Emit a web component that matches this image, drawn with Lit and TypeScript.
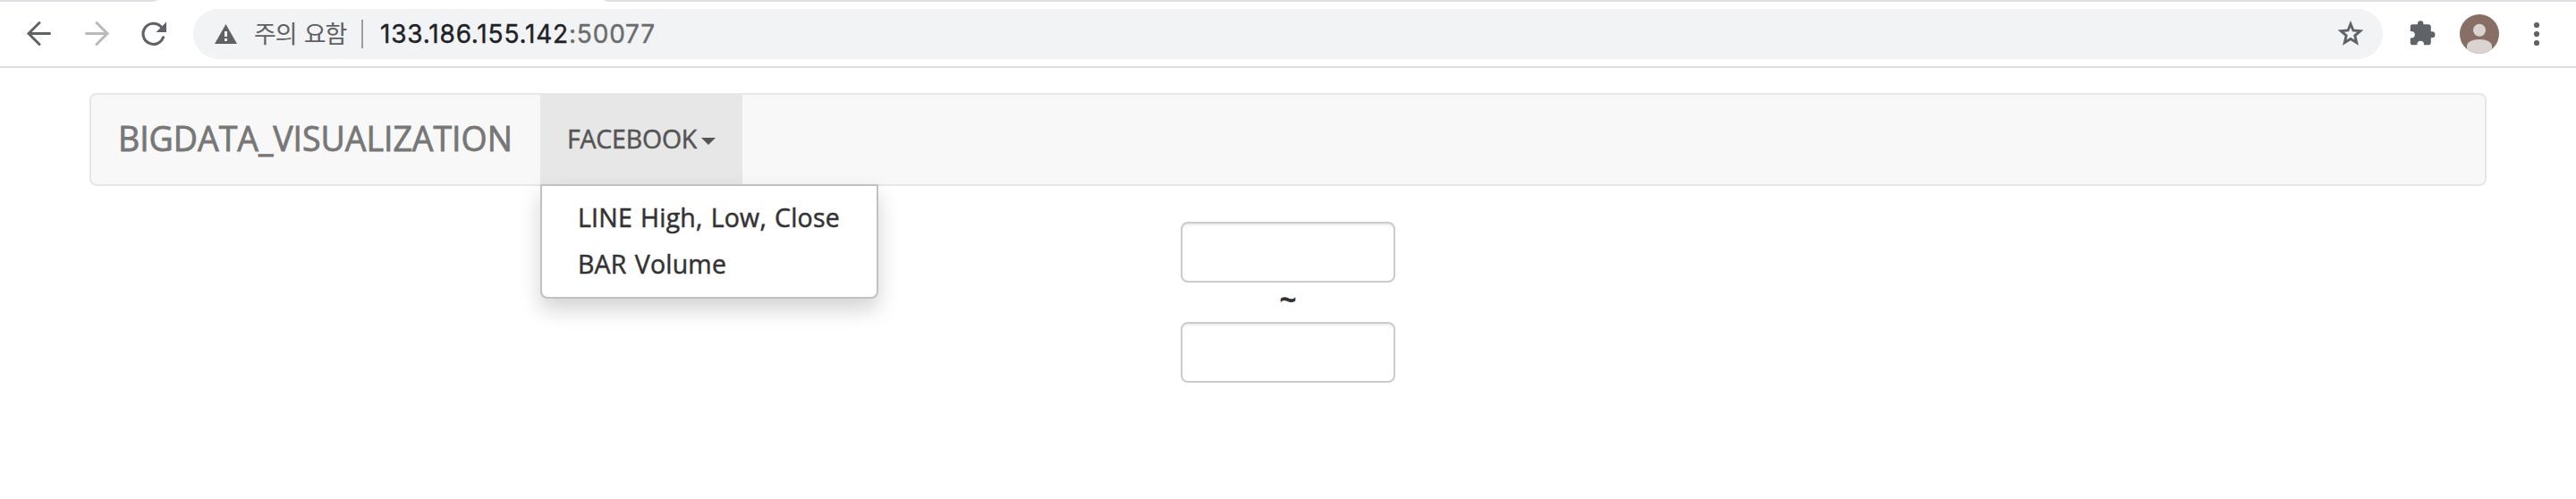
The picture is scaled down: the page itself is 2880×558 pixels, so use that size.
import { LitElement, html, css } from "lit";
import { customElement, property } from "lit/decorators.js";

@customElement("browser-toolbar")
class BrowserToolbar extends LitElement {
  static styles = css`
    :host { display: block; height: 76px; box-sizing: border-box; background: #fff; border-bottom: 2px solid #dcdce1; }
    .edge { display: flex; justify-content: space-between; height: 2px; }
    .edge-left { width: 176px; background: #dfdfe5; border-bottom-right-radius: 10px 2px; }
    .edge-right { width: 2205px; background: #dfdfe5; border-bottom-left-radius: 10px 2px; }
    .bar { display: flex; align-items: center; height: 56px; padding: 8px 24px 0 24px; }
    svg { display: block; flex: none; }
    .forward { margin-left: 24px; }
    .reload { margin-left: 24px; }
    .address {
      flex: 1; display: flex; align-items: center; height: 56px; box-sizing: border-box;
      margin-left: 24px; padding: 0 16px 0 24px; border-radius: 28px; background: #f1f3f4;
      font: 400 28px/56px Inter, sans-serif; white-space: pre;
    }
    .warning { font: 400 27px/54px "Noto Sans CJK KR", sans-serif; color: #5f6062; width: 120px; height: 56px; margin-left: 19px; letter-spacing: -1px; word-spacing: 3px; }
    .divider { width: 2px; height: 32px; background: #9b9c9e; }
    .url { margin-left: 19px; flex: 1; color: #202124; letter-spacing: 0.82px; -webkit-text-stroke: 0.4px currentColor; }
    .port { color: #6b6c6e; }
    .puzzle { margin-left: 24px; }
    .avatar { margin-left: 22px; }
    .menu { margin-left: 22px; }
  `;
  render() {
    return html`
      <div class="edge"><div class="edge-left"></div><div class="edge-right"></div></div>
      <div class="bar">
        <svg class="back" width="40" height="40" viewBox="0 0 40 40" fill="none" stroke="#5f6368" stroke-width="3" stroke-linecap="round">
          <path d="M20 7.500 8 19.500 20 31.500M8.500 19.500H31.500" />
        </svg>
        <svg class="forward" width="40" height="40" viewBox="0 0 40 40" fill="none" stroke="#bababb" stroke-width="3" stroke-linecap="round">
          <path d="M20 7.500 32 19.500 20 31.500M8.500 19.500H31.500" />
        </svg>
        <svg class="reload" width="40" height="40" viewBox="0 0 40 40">
          <path d="M30.500 23.800A11.600 11.600 0 1 1 28 11.800" fill="none" stroke="#5f6368" stroke-width="3.100" stroke-linecap="round" />
          <path d="M34 6.500V18H22.500Z" fill="#5f6368" />
        </svg>
        <div class="address">
          <svg width="25" height="22" viewBox="0 0 25 22">
            <path fill-rule="evenodd" fill="#606163" d="M12.500 0 25 22H0ZM11 8V14H14V8ZM11 16V19H14V16Z" />
          </svg>
          <span class="warning">주의 요함</span>
          <span class="divider"></span>
          <span class="url">133.186.155.142<span class="port">:50077</span></span>
          <svg width="40" height="40" viewBox="0 0 40 40">
            <path fill="none" stroke="#5f6368" stroke-width="2.900" d="M20 8.800 22.900 16 30.800 16.700 24.800 21.800 26.700 29.600 20 25.400 13.300 29.600 15.200 21.800 9.200 16.700 17.100 16Z" />
          </svg>
        </div>
        <svg class="puzzle" width="40" height="40" viewBox="0 0 40 40">
          <path fill="#5f6368" d="M15 9.200V8.500a3.200 3.200 0 0 1 6.400 0V9.200H27a2.800 2.800 0 0 1 2.800 2.800V17.300h1.200a3.300 3.300 0 0 1 0 7H29.800V29.400a2.800 2.800 0 0 1-2.800 2.800H22V31.500a3.800 3.800 0 0 0-7.600 0V32.200H9.500a2.700 2.700 0 0 1-2.700-2.800V24.500H8a3.800 3.800 0 0 0 0-7.600H6.800V12a2.800 2.800 0 0 1 2.700-2.800Z" />
        </svg>
        <svg class="avatar" width="44" height="44" viewBox="0 0 44 44">
          <defs><clipPath id="disc"><circle cx="22" cy="22" r="22" /></clipPath></defs>
          <g clip-path="url(#disc)">
            <rect width="44" height="44" fill="#886f65" />
            <circle cx="22" cy="17.800" r="7" fill="#dbd3d0" />
            <path fill="#dbd3d0" d="M8 44V35.500C8 31 14 28 22 28S36 31 36 35.500V44Z" />
          </g>
        </svg>
        <svg class="menu" width="40" height="40" viewBox="0 0 40 40" fill="#5f6368">
          <circle cx="20" cy="10" r="3.100" /><circle cx="20" cy="20" r="3.100" /><circle cx="20" cy="30" r="3.100" />
        </svg>
      </div>
    `;
  }
}

@customElement("nav-dropdown")
class NavDropdown extends LitElement {
  @property() label = "";
  @property({ attribute: false }) items: string[] = [];
  static styles = css`
    :host { display: block; position: relative; width: 226px; height: 100px; }
    .toggle { display: flex; align-items: center; height: 100px; box-sizing: border-box; padding: 0 30px; background: #e7e7e7; color: #555; font-size: 28.5px; }
    .label { width: 150px; flex: none; white-space: nowrap; letter-spacing: -0.2px; line-height: 38px; padding-bottom: 2px; -webkit-text-stroke: 0.5px currentColor; }
    .caret { margin-top: 4px; border-top: 8px solid #555; border-left: 8px solid transparent; border-right: 8px solid transparent; }
    .list {
      position: absolute; top: 100px; left: 0; z-index: 1; width: 378px; height: 128px; box-sizing: border-box;
      margin: 0; padding: 9px 0 11px; list-style: none; background: #fff; background-clip: padding-box;
      border: 2px solid #c1c1c1; border-radius: 0 0 8px 8px; box-shadow: 0 12px 24px rgba(0, 0, 0, 0.175);
    }
    .item { padding: 0 40px; color: #333; font-size: 28.5px; line-height: 52px; white-space: nowrap; letter-spacing: 0.2px; word-spacing: 1.5px; -webkit-text-stroke: 0.5px currentColor; }
  `;
  render() {
    return html`
      <div class="toggle"><span class="label">${this.label}</span><span class="caret"></span></div>
      <ul class="list">${this.items.map((i) => html`<li class="item">${i}</li>`)}</ul>
    `;
  }
}

@customElement("app-root")
class AppRoot extends LitElement {
  static styles = css`
    :host { display: block; height: 558px; background: #fff; overflow: hidden; font-family: "Lucida Grande", "Open Sans", sans-serif; color: #333; }
    .navbar { display: flex; height: 104px; box-sizing: border-box; margin: 28px 100px 0; border: 2px solid #e7e7e7; border-radius: 8px; background: #f8f8f8; }
    .brand { width: 502px; box-sizing: border-box; padding-left: 30px; color: #777; font-size: 37.5px; line-height: 98px; white-space: nowrap; letter-spacing: -0.05px; -webkit-text-stroke: 0.8px currentColor; }
    .range { display: flex; flex-direction: column; align-items: center; margin-top: 40px; }
    .date { display: block; width: 240px; height: 68px; box-sizing: border-box; border: 2px solid #ccc; border-radius: 8px; background: #fff; box-shadow: inset 0 2px 2px rgba(0, 0, 0, 0.075); padding: 0 24px; outline: none; }
    .tilde { height: 44px; line-height: 37px; font-size: 34px; font-weight: 700; }
  `;
  render() {
    return html`
      <browser-toolbar></browser-toolbar>
      <nav class="navbar">
        <div class="brand">BIGDATA_VISUALIZATION</div>
        <nav-dropdown label="FACEBOOK" .items=${["LINE High, Low, Close", "BAR Volume"]}></nav-dropdown>
      </nav>
      <main class="range">
        <input class="date" type="text" />
        <span class="tilde">~</span>
        <input class="date" type="text" />
      </main>
    `;
  }
}
